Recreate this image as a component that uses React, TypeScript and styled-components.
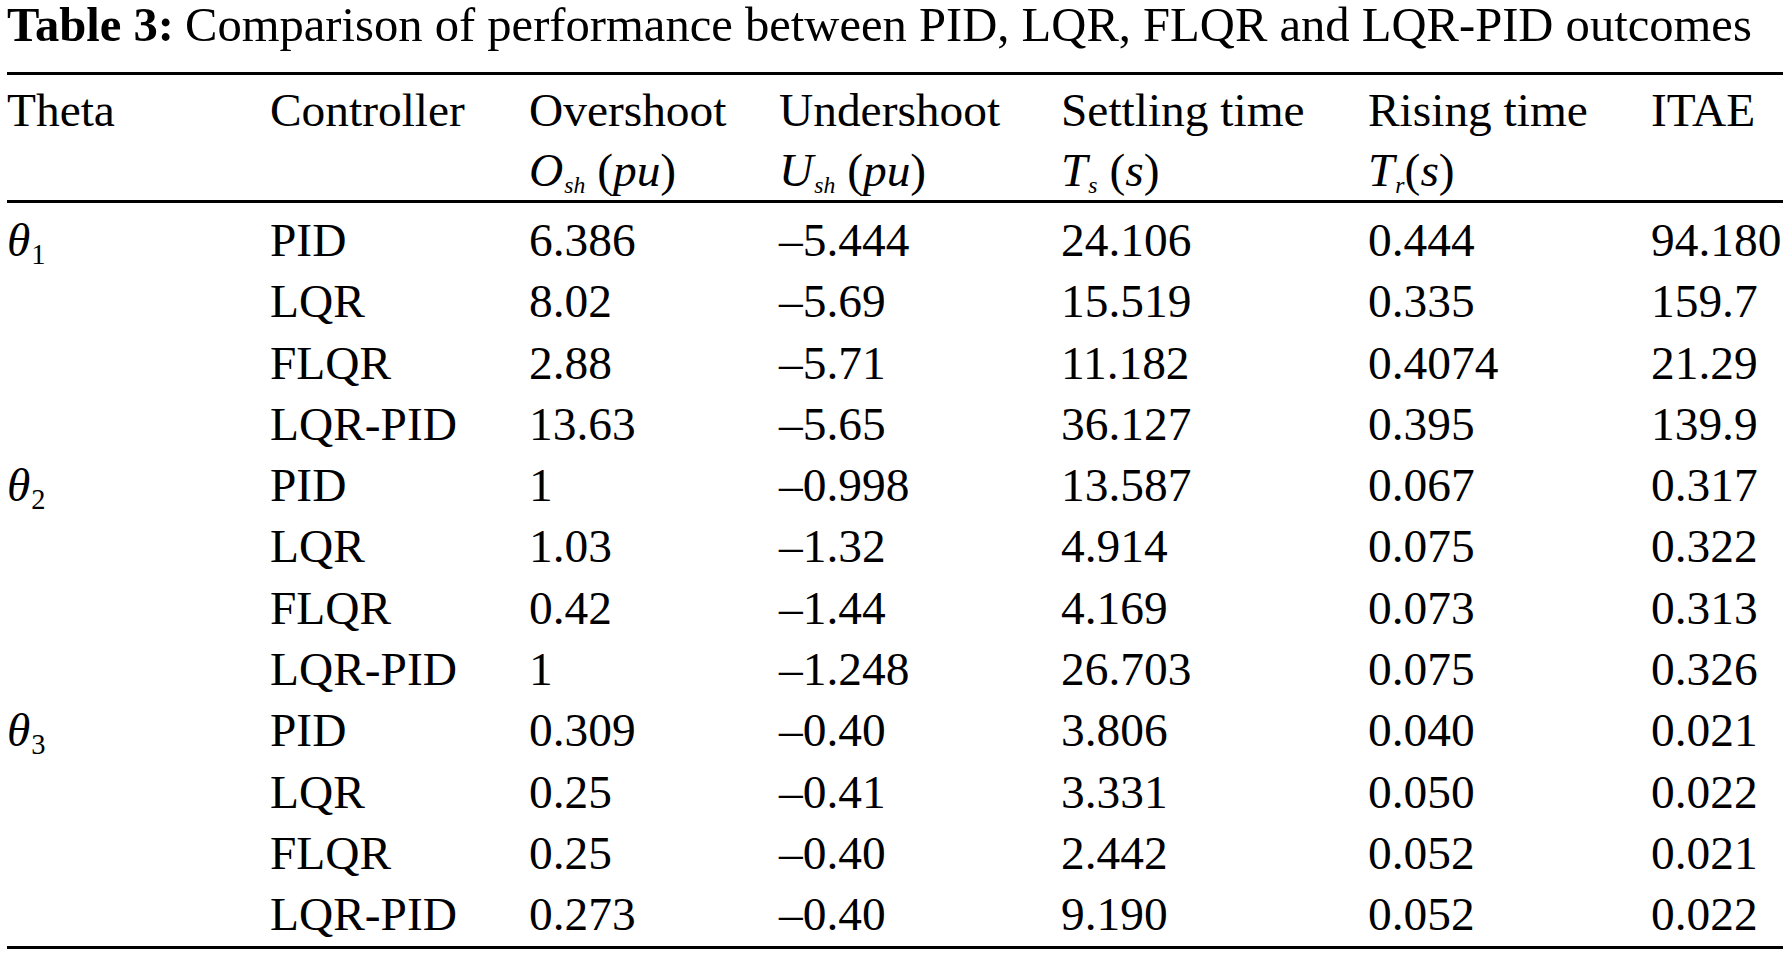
import styled, { createGlobalStyle } from "styled-components";

const GlobalStyle = createGlobalStyle`
  html, body {
    margin: 0;
    padding: 0;
    background: #fff;
  }
  body {
    font-family: "Liberation Serif", "Times New Roman", serif;
    color: #000;
  }
`;

const Page = styled.div`
  padding-left: 7px;
  width: 1776px;
`;

const Caption = styled.div`
  font-size: 48.6px;
  line-height: 50px;
  height: 50px;
  white-space: nowrap;
  margin-bottom: 22px;
`;

const CaptionLabel = styled.b`
  margin-right: 11px;
`;

const Rules = styled.div`
  border-top: 3px solid #000;
  border-bottom: 3px solid #000;
`;

const Row = styled.div<{ $header?: boolean }>`
  display: grid;
  grid-template-columns: 263px 259px 250px 282px 307px 283px 1fr;
  font-size: 47.4px;
  line-height: ${(p) => (p.$header ? "60px" : "61.3px")};
  white-space: nowrap;
`;

const HeadBlock = styled.div`
  padding: 5px 0 0;
  border-bottom: 3px solid #000;
`;

const Body = styled.div`
  padding-top: 7px;
`;

const Cell = styled.div``;

const Line = styled.span`
  display: block;
  height: 60px;
`;

const Ital = styled.i`
  font-style: italic;
`;

const Sub = styled.sub<{ $upright?: boolean }>`
  font-size: ${(p) => (p.$upright ? "0.6em" : "0.5em")};
  line-height: 0;
  vertical-align: -0.28em;
  font-style: ${(p) => (p.$upright ? "normal" : "italic")};
  margin-left: 1px;
`;

type Entry = {
  theta?: string;
  ctrl: string;
  over: string;
  under: string;
  settle: string;
  rise: string;
  itae: string;
};

const rows: Entry[] = [
  { theta: "1", ctrl: "PID", over: "6.386", under: "–5.444", settle: "24.106", rise: "0.444", itae: "94.180" },
  { ctrl: "LQR", over: "8.02", under: "–5.69", settle: "15.519", rise: "0.335", itae: "159.7" },
  { ctrl: "FLQR", over: "2.88", under: "–5.71", settle: "11.182", rise: "0.4074", itae: "21.29" },
  { ctrl: "LQR-PID", over: "13.63", under: "–5.65", settle: "36.127", rise: "0.395", itae: "139.9" },
  { theta: "2", ctrl: "PID", over: "1", under: "–0.998", settle: "13.587", rise: "0.067", itae: "0.317" },
  { ctrl: "LQR", over: "1.03", under: "–1.32", settle: "4.914", rise: "0.075", itae: "0.322" },
  { ctrl: "FLQR", over: "0.42", under: "–1.44", settle: "4.169", rise: "0.073", itae: "0.313" },
  { ctrl: "LQR-PID", over: "1", under: "–1.248", settle: "26.703", rise: "0.075", itae: "0.326" },
  { theta: "3", ctrl: "PID", over: "0.309", under: "–0.40", settle: "3.806", rise: "0.040", itae: "0.021" },
  { ctrl: "LQR", over: "0.25", under: "–0.41", settle: "3.331", rise: "0.050", itae: "0.022" },
  { ctrl: "FLQR", over: "0.25", under: "–0.40", settle: "2.442", rise: "0.052", itae: "0.021" },
  { ctrl: "LQR-PID", over: "0.273", under: "–0.40", settle: "9.190", rise: "0.052", itae: "0.022" },
];

const App = () => {
  return (
    <Page>
      <GlobalStyle />
      <Caption>
        <CaptionLabel>Table 3:</CaptionLabel>
        Comparison of performance between PID, LQR, FLQR and LQR-PID outcomes
      </Caption>
      <Rules>
        <HeadBlock>
          <Row $header>
            <Cell><Line>Theta</Line></Cell>
            <Cell><Line>Controller</Line></Cell>
            <Cell>
              <Line>Overshoot</Line>
              <Line><Ital>O</Ital><Sub>sh</Sub> (<Ital>pu</Ital>)</Line>
            </Cell>
            <Cell>
              <Line>Undershoot</Line>
              <Line><Ital>U</Ital><Sub>sh</Sub> (<Ital>pu</Ital>)</Line>
            </Cell>
            <Cell>
              <Line>Settling time</Line>
              <Line><Ital>T</Ital><Sub>s</Sub> (<Ital>s</Ital>)</Line>
            </Cell>
            <Cell>
              <Line>Rising time</Line>
              <Line><Ital>T</Ital><Sub>r</Sub>(<Ital>s</Ital>)</Line>
            </Cell>
            <Cell><Line>ITAE</Line></Cell>
          </Row>
        </HeadBlock>
        <Body>
          {rows.map((r, i) => (
            <Row key={i}>
              <Cell>
                {r.theta && (
                  <>
                    <Ital>θ</Ital>
                    <Sub $upright>{r.theta}</Sub>
                  </>
                )}
              </Cell>
              <Cell>{r.ctrl}</Cell>
              <Cell>{r.over}</Cell>
              <Cell>{r.under}</Cell>
              <Cell>{r.settle}</Cell>
              <Cell>{r.rise}</Cell>
              <Cell>{r.itae}</Cell>
            </Row>
          ))}
        </Body>
      </Rules>
    </Page>
  );
};

export default App;
